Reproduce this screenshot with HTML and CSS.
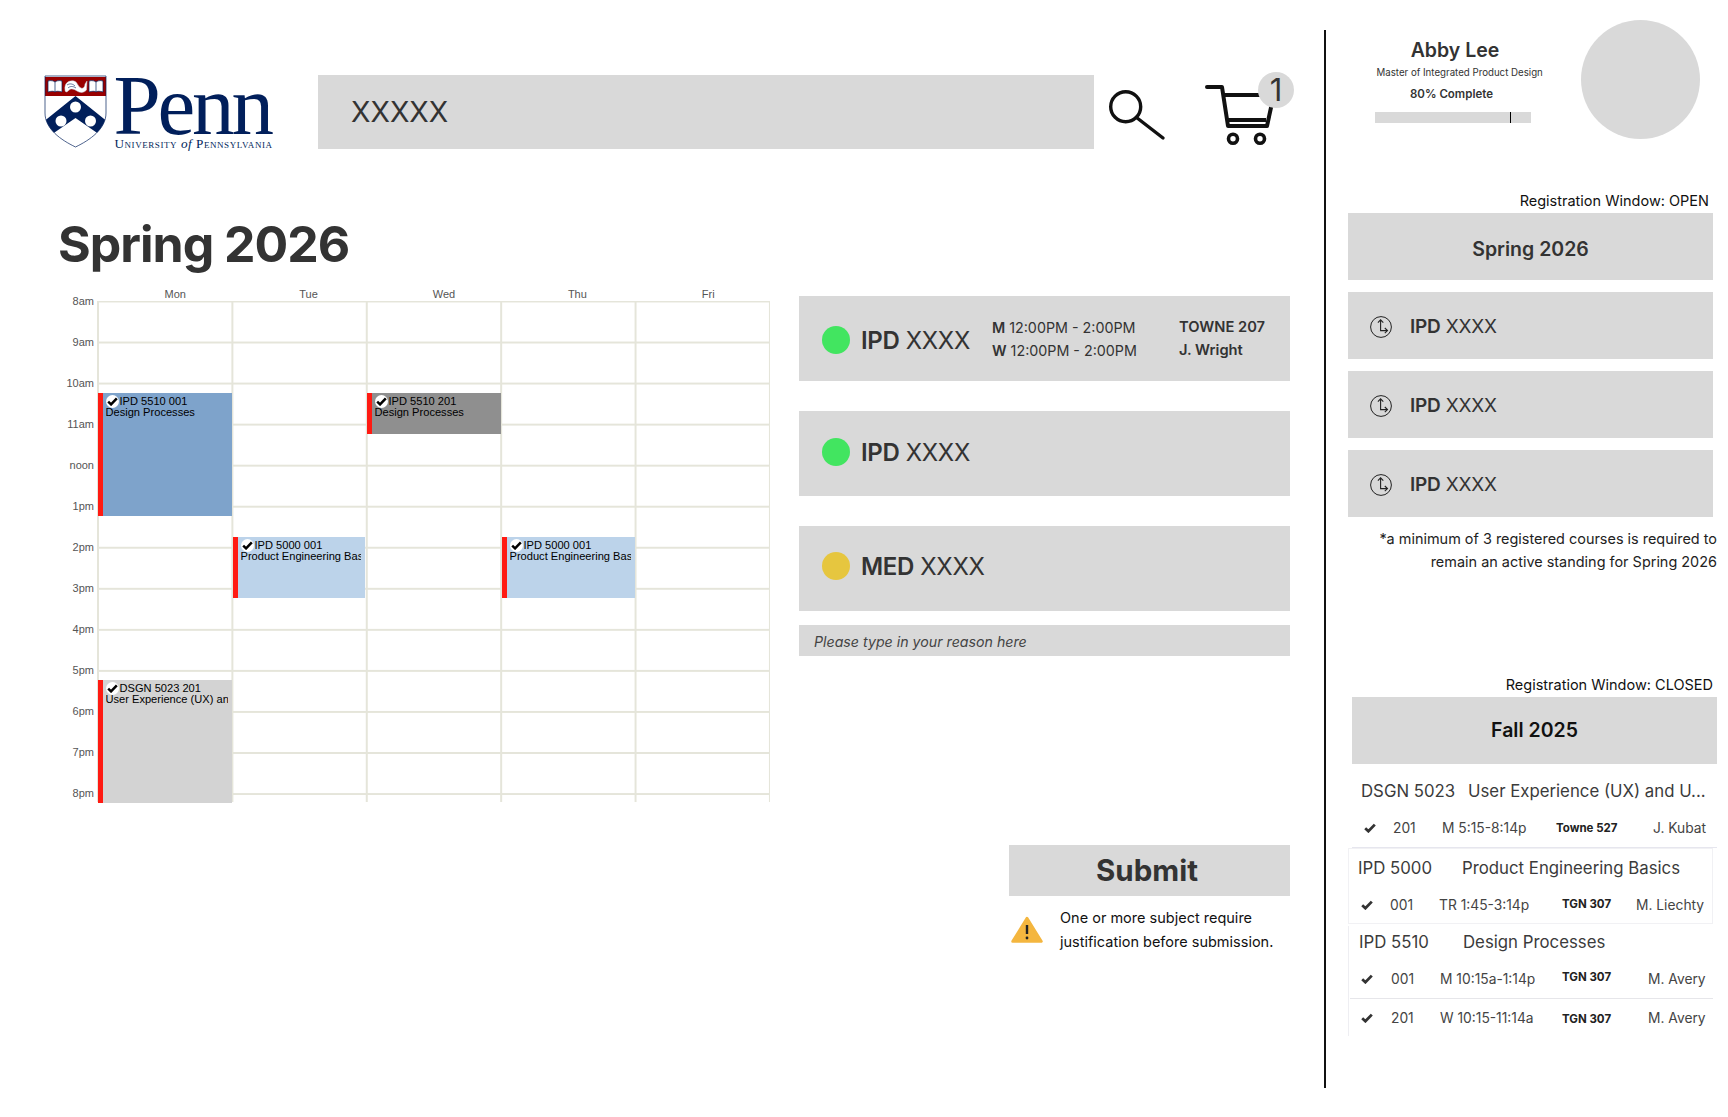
FILE: index.html
```html
<!DOCTYPE html>
<html lang="en">
<head>
<meta charset="utf-8">
<title>Penn course registration</title>
<link rel="stylesheet" href="styles.css">
</head>
<body>
<svg class="defs" width="0" height="0" aria-hidden="true">
  <symbol id="check" viewBox="0 0 12 10"><path d="M1.200 5.200 4.400 8.200 10.800 1.600" fill="none" stroke="currentColor" stroke-width="2.800"/></symbol>
  <symbol id="clock" viewBox="0 0 22 22">
    <circle cx="11" cy="11" r="10.400" fill="none" stroke="#222" stroke-width="1"/>
    <path d="M10.600 3.800V14.600H17.400M7.900 6.600 10.600 3.800 13.300 6.600M14.800 12 17.500 14.600 14.800 17.200" fill="none" stroke="#222" stroke-width="1.100"/>
  </symbol>
</svg>
<div class="page">
  <main class="main">
    <header class="header">
      <div class="logo">
        <svg class="shield" viewBox="0 0 63 73" width="63" height="73">
          <defs><clipPath id="shield-clip"><path d="M1 1H62V38C62 54 46 65 31.500 72 17 65 1 54 1 38Z"/></clipPath></defs>
          <path d="M1 1H62V38C62 54 46 65 31.500 72 17 65 1 54 1 38Z" fill="#fff"/>
          <g clip-path="url(#shield-clip)">
            <rect x="1" y="2" width="61" height="19" fill="#990000"/>
            <path d="M4 6C7 5 10 6 11 7 12 6 15 5 18 6V17C15 16 12 16 11 17 10 16 7 16 4 17Z" fill="#fff" stroke="#011f5b" stroke-width=".7"/>
            <path d="M45 6C48 5 51 6 52 7 53 6 56 5 59 6V17C56 16 53 16 52 17 51 16 48 16 45 17Z" fill="#fff" stroke="#011f5b" stroke-width=".7"/>
            <path d="M11 7V17M52 7V17" stroke="#011f5b" stroke-width=".7"/>
            <path d="M21 15C20 8 25 5 30 6 34 7 33 11 37 13 39 14 41 12 41 9L43 6 42.500 15C40 18 36 18 33 16 30 14 27 13 25 15 24 17 21 18 21 15Z" fill="#fff" stroke="#c9cedd" stroke-width=".5"/>
            <path d="M23 10C26 8 29 9 31 11M24 13C26 11 29 11 32 13" fill="none" stroke="#011f5b" stroke-width=".6"/>
            <path d="M31.500 21 70 52 59 62 31.500 43 4 62-7 52Z" fill="#011f5b"/>
            <circle cx="31.500" cy="32" r="5.500" fill="#fff"/>
            <circle cx="17" cy="46" r="5.500" fill="#fff"/>
            <circle cx="46.500" cy="46" r="5.500" fill="#fff"/>
          </g>
          <path d="M1 1H62V38C62 54 46 65 31.500 72 17 65 1 54 1 38Z" fill="none" stroke="#011f5b" stroke-width=".7"/>
        </svg>
        <div class="wordmark">
          <div class="penn">Penn</div>
          <div class="tagline">University <i>of</i> Pennsylvania</div>
        </div>
      </div>
      <div class="search">XXXXX</div>
      <svg class="search-icon" viewBox="0 0 58 54" width="58" height="54">
        <circle cx="17.700" cy="18.700" r="15" fill="none" stroke="#111" stroke-width="3.400"/>
        <path d="M28.500 29.500 55 50" fill="none" stroke="#111" stroke-width="3.400" stroke-linecap="round"/>
      </svg>
      <div class="cart">
        <svg viewBox="0 0 70 62" width="70" height="62">
          <path d="M3 2H18L24 41H63L68 18" fill="none" stroke="#111" stroke-width="4" stroke-linecap="round" stroke-linejoin="round"/>
          <path d="M20 10H60M24 35H62" fill="none" stroke="#111" stroke-width="4"/>
          <circle cx="29" cy="53.700" r="4.500" fill="none" stroke="#111" stroke-width="3.600"/>
          <circle cx="56" cy="53.700" r="4.500" fill="none" stroke="#111" stroke-width="3.600"/>
        </svg>
        <span class="badge">1</span>
      </div>
    </header>

    <h1 class="title">Spring 2026</h1>

    <div class="content">
      <section class="calendar">
        <div class="hours">
          <span>8am</span><span>9am</span><span>10am</span><span>11am</span><span>noon</span><span>1pm</span><span>2pm</span><span>3pm</span><span>4pm</span><span>5pm</span><span>6pm</span><span>7pm</span><span>8pm</span>
        </div>
        <div class="cal-main">
          <div class="days"><span class="day-odd">Mon</span><span>Tue</span><span class="day-odd">Wed</span><span>Thu</span><span class="day-fri">Fri</span></div>
          <div class="cal-grid">
            <div class="event ev-mon">
              <div class="ev-line"><span class="ev-check"><svg width="11" height="9"><use href="#check"/></svg></span>IPD 5510 001</div>
              <div class="ev-name">Design Processes</div>
            </div>
            <div class="event ev-wed">
              <div class="ev-line"><span class="ev-check"><svg width="11" height="9"><use href="#check"/></svg></span>IPD 5510 201</div>
              <div class="ev-name">Design Processes</div>
            </div>
            <div class="event ev-tue">
              <div class="ev-line"><span class="ev-check"><svg width="11" height="9"><use href="#check"/></svg></span>IPD 5000 001</div>
              <div class="ev-name">Product Engineering Basics</div>
            </div>
            <div class="event ev-thu">
              <div class="ev-line"><span class="ev-check"><svg width="11" height="9"><use href="#check"/></svg></span>IPD 5000 001</div>
              <div class="ev-name">Product Engineering Basics</div>
            </div>
            <div class="event ev-dsgn">
              <div class="ev-line"><span class="ev-check"><svg width="11" height="9"><use href="#check"/></svg></span>DSGN 5023 201</div>
              <div class="ev-name">User Experience (UX) and UI</div>
            </div>
          </div>
        </div>
      </section>

      <section class="cart-list">
        <div class="card card-one">
          <span class="dot dot-green"></span>
          <span class="code"><b>IPD</b> XXXX</span>
          <div class="schedule">
            <div><b>M</b> 12:00PM - 2:00PM</div>
            <div><b>W</b> 12:00PM - 2:00PM</div>
          </div>
          <div class="place">
            <div>TOWNE 207</div>
            <div>J. Wright</div>
          </div>
        </div>
        <div class="card card-two">
          <span class="dot dot-green"></span>
          <span class="code"><b>IPD</b> XXXX</span>
        </div>
        <div class="card card-three">
          <span class="dot dot-yellow"></span>
          <span class="code"><b>MED</b> XXXX</span>
        </div>
        <div class="reason">Please type in your reason here</div>
        <div class="submit">Submit</div>
        <div class="warning">
          <svg viewBox="0 0 32 27" width="32" height="27">
            <path d="M16 2 30.500 25.500H1.500Z" fill="#f4b63f" stroke="#f4b63f" stroke-width="2.500" stroke-linejoin="round"/>
            <path d="M16 9V18" stroke="#222" stroke-width="2.400"/>
            <circle cx="16" cy="22" r="1.400" fill="#222"/>
          </svg>
          <p>One or more subject require justification before submission.</p>
        </div>
      </section>
    </div>
  </main>

  <div class="divider"></div>

  <aside class="aside">
    <div class="profile">
      <div class="profile-text">
        <div class="name">Abby Lee</div>
        <div class="degree">Master of Integrated Product Design</div>
        <div class="complete">80% Complete</div>
        <div class="progress"><span class="tick"></span></div>
      </div>
      <div class="avatar"></div>
    </div>

    <div class="window window-open">Registration Window: OPEN</div>
    <div class="term term-spring">Spring 2026</div>
    <div class="pending"><svg width="22" height="22"><use href="#clock"/></svg><span><b>IPD</b> XXXX</span></div>
    <div class="pending"><svg width="22" height="22"><use href="#clock"/></svg><span><b>IPD</b> XXXX</span></div>
    <div class="pending"><svg width="22" height="22"><use href="#clock"/></svg><span><b>IPD</b> XXXX</span></div>
    <p class="note">*a minimum of 3 registered courses is required to<br>remain an active standing for Spring 2026</p>

    <div class="window window-closed">Registration Window: CLOSED</div>
    <div class="term term-fall">Fall 2025</div>

    <div class="course course-dsgn">
      <div class="course-head"><span class="head-code-dsgn">DSGN 5023</span><span>User Experience (UX) and U...</span></div>
      <div class="row row-dsgn">
        <svg width="12" height="10"><use href="#check"/></svg><span>201</span><span>M 5:15-8:14p</span><b>Towne 527</b><span>J. Kubat</span>
      </div>
    </div>

    <div class="course course-5000">
      <div class="course-head"><span class="head-code">IPD 5000</span><span>Product Engineering Basics</span></div>
      <div class="row row-5000">
        <svg width="12" height="10"><use href="#check"/></svg><span>001</span><span>TR 1:45-3:14p</span><b>TGN 307</b><span>M. Liechty</span>
      </div>
    </div>

    <div class="course course-5510">
      <div class="course-head"><span class="head-code">IPD 5510</span><span>Design Processes</span></div>
      <div class="row row-5510 row-first">
        <svg width="12" height="10"><use href="#check"/></svg><span>001</span><span>M 10:15a-1:14p</span><b>TGN 307</b><span>M. Avery</span>
      </div>
      <div class="row row-5510 row-second">
        <svg width="12" height="10"><use href="#check"/></svg><span>201</span><span>W 10:15-11:14a</span><b>TGN 307</b><span>M. Avery</span>
      </div>
    </div>
  </aside>
</div>
</body>
</html>
```

FILE: styles.css
```css
* { box-sizing: border-box; }
html, body { margin: 0; padding: 0; background: #fff; }
body { font-family: "Inter", "Liberation Sans", sans-serif; color: #333; overflow: hidden; }
b { font-weight: 600; }
.defs { position: absolute; }

.page { display: flex; width: 1728px; height: 1117px; }
.main { width: 1324px; flex: none; padding: 75px 0 0 44px; }
.divider { width: 1.500px; flex: none; margin: 30px 0 29px; background: #111; }
.aside { flex: 1; padding-top: 20px; min-width: 0; }

/* Header */
.header { display: flex; align-items: flex-start; height: 74px; }
.logo { display: flex; width: 227px; margin-right: 47px; flex: none; }
.shield { flex: none; display: block; }
.wordmark { margin-left: 6.500px; color: #011f5b; font-family: "Liberation Serif", serif; }
.penn { font-size: 85px; line-height: 60px; letter-spacing: -3.200px; height: 62px; white-space: nowrap; }
.tagline { font-size: 13.200px; line-height: 13px; font-variant: small-caps; letter-spacing: .55px; white-space: nowrap; padding-left: 1px; }
.tagline i { font-variant: normal; }
.search { width: 776px; height: 74px; flex: none; background: #d9d9d9; padding-left: 33px; font-size: 28.500px; line-height: 74px; color: #333; }
.search-icon { flex: none; margin: 13px 0 0 14px; }
.cart { position: relative; flex: none; width: 70px; height: 62px; margin: 10px 0 0 38px; }
.cart svg { display: block; }
.badge { position: absolute; left: 54px; top: -13.500px; width: 36px; height: 36px; border-radius: 50%; background: #d9d9d9; text-align: center; font-size: 31px; line-height: 36px; color: #333; }

.title { margin: 65px 0 0 14px; font-size: 50px; line-height: 60px; font-weight: 700; color: #333; height: 72px; letter-spacing: -1px; }

/* Calendar */
.content { display: flex; align-items: flex-start; }
.calendar { display: flex; width: 726px; flex: none; font-family: "Liberation Sans", Arial, sans-serif; }
.hours { width: 50px; flex: none; margin-top: -5.500px; display: flex; flex-direction: column; text-align: right; font-size: 11px; color: #555; }
.hours span { height: 41.050px; line-height: 41.050px; }
.cal-main { width: 673px; margin-left: 2.500px; flex: none; }
.days { display: grid; grid-template-columns: repeat(5, 134.400px); height: 15px; font-size: 11px; line-height: 17px; color: #555; text-align: center; }
.days span { padding-left: 21px; }
.days .day-odd { padding-left: 23px; }
.days .day-fri { padding-left: 14px; }
.cal-grid {
  position: relative;
  height: 501px;
  width: 673px;
  background-color: #fff;
  background-image:
    linear-gradient(to right, #e5e5da 1.600px, transparent 1.600px),
    linear-gradient(to bottom, #e5e5da 1.600px, transparent 1.600px);
  background-size: 134.400px 100%, 100% 41.050px;
  background-position: 0 0, 0 -0.500px;
}
.event { position: absolute; border-left: 5.500px solid #ff1a12; padding: 2.500px 4px 0 3px; font-size: 11.100px; line-height: 11px; color: #000; overflow: hidden; white-space: nowrap; }
.ev-line { display: flex; align-items: center; height: 11px; }
.ev-check { width: 13px; height: 13px; border-radius: 50%; background: #fff; display: inline-flex; align-items: center; justify-content: center; margin-right: 1px; flex: none; }
.ev-check svg { display: block; }
.ev-name { overflow: hidden; }
.ev-mon { left: 1px; top: 92px; width: 134px; height: 123px; background: #7ea3cb; }
.ev-wed { left: 270px; top: 92px; width: 134px; height: 41px; background: #8f8f8f; }
.ev-tue { left: 136px; top: 236px; width: 132.500px; height: 61px; background: #bcd3ea; padding-top: 3px; }
.ev-thu { left: 405px; top: 236px; width: 133px; height: 61px; background: #bcd3ea; padding-top: 3px; }
.ev-dsgn { left: 1px; top: 379px; width: 134px; height: 123px; background: #d3d3d3; }

/* Selected courses */
.cart-list { width: 491px; margin: 10px 0 0 29px; flex: none; }
.card { display: flex; align-items: center; height: 85px; margin-bottom: 30px; background: #d9d9d9; padding-left: 23px; }
.card-one { padding-top: 3px; }
.card-two { padding-bottom: 3px; }
.card-three { padding-bottom: 5px; margin-bottom: 14px; }
.dot { width: 28px; height: 28px; border-radius: 50%; flex: none; }
.dot-green { background: #42e560; }
.dot-yellow { background: #e6c63f; }
.code { margin-left: 11px; padding-top: 2px; font-size: 24px; line-height: 30px; color: #333; white-space: nowrap; letter-spacing: -.35px; }
.card-one .code { width: 131px; flex: none; }
.schedule { width: 187px; flex: none; font-size: 14.300px; line-height: 23px; margin-top: -3px; color: #333; }
.place { font-size: 14.700px; line-height: 23px; font-weight: 600; margin-top: -3px; color: #333; }
.reason { height: 31px; background: #d9d9d9; padding-left: 15px; font-size: 14.200px; line-height: 34px; font-style: italic; color: #444; }
.submit { width: 281px; height: 51px; margin: 189px 0 0 auto; background: #d9d9d9; padding-right: 5px; text-align: center; font-size: 29.500px; line-height: 51px; font-weight: 700; color: #333; }
.warning { display: flex; width: 281px; margin: 10px 0 0 auto; padding-left: 2px; color: #111; }
.warning svg { flex: none; margin: 10px 17px 0 0; }
.warning p { margin: 0; font-size: 14.500px; line-height: 24px; width: 225px; }

/* Profile */
.profile { display: flex; height: 119px; padding-left: 49.500px; }
.profile-text { width: 156px; margin-right: 50px; flex: none; }
.name { margin-top: 18px; height: 24px; line-height: 24px; font-size: 19.500px; font-weight: 600; color: #333; text-align: center; padding-left: 4px; white-space: nowrap; }
.degree { margin: 3px 0 0 1.500px; height: 14px; line-height: 16px; font-size: 9.700px; color: #333; white-space: nowrap; }
.complete { margin: 7px 0 0 35px; height: 16px; line-height: 16px; font-size: 11.500px; font-weight: 600; color: #333; white-space: nowrap; }
.progress { position: relative; margin-top: 10px; height: 11px; background: #d9d9d9; }
.tick { position: absolute; left: 134.500px; top: 0; width: 1px; height: 11px; background: #000; }
.avatar { width: 119px; height: 119px; border-radius: 50%; background: #d9d9d9; flex: none; }

.window { height: 18px; line-height: 18px; font-size: 14.500px; color: #111; text-align: right; white-space: nowrap; }
.window-open { margin-top: 53px; padding-right: 19px; }
.window-closed { margin-top: 103.500px; padding-right: 15px; }
.term { display: flex; align-items: center; justify-content: center; height: 67px; width: 365px; margin-top: 3px; background: #d9d9d9; font-size: 19.500px; font-weight: 600; }
.term-spring { margin-left: 22.500px; padding-top: 4px; color: #333; }
.term-fall { margin-left: 26.500px; padding-bottom: 2px; color: #111; }
.pending { display: flex; align-items: center; width: 365px; height: 67px; margin: 12px 0 0 22.500px; padding: 2px 0 0 22px; background: #d9d9d9; font-size: 19px; letter-spacing: -.2px; color: #333; }
.pending svg { flex: none; margin-right: 18px; }
.note { margin: 9.500px 11px 0 0; font-size: 14.450px; line-height: 23px; text-align: right; color: #222; white-space: nowrap; }

/* Past courses */
.course { color: #3b3b3b; }
.course-head { display: flex; font-size: 16.800px; line-height: 22px; white-space: nowrap; }
.row { display: grid; align-items: center; font-size: 13.800px; line-height: 18px; color: #444; white-space: nowrap; }
.row svg { color: #333; display: block; }
.row b { font-size: 11.500px; font-weight: 700; color: #222; }
.course-dsgn { margin-left: 26.500px; width: 365px; height: 84px; padding: 16px 0 0 9px; border-bottom: 1px solid #e6e6ee; }
.head-code-dsgn { width: 107px; flex: none; }
.course-dsgn .row { margin-top: 17px; }
.row-dsgn { grid-template-columns: 29px 49px 114px 97px auto; padding-left: 3px; }
.course-5000 { margin-left: 22.500px; width: 365px; height: 76px; border: 1px solid #f1f1f4; padding: 8px 0 0 9px; }
.head-code { width: 104px; flex: none; }
.course-5000 .row { margin-top: 17px; }
.course-5000 .row b { margin-top: -2px; }
.row-5000 { grid-template-columns: 29px 49px 123px 74px auto; padding-left: 3px; }
.course-5510 { margin: 2px 0 0 22.500px; width: 365px; height: 110px; border-left: 1px solid #eeeef2; padding: 5px 0 0 10px; }
.row-5510 { grid-template-columns: 30px 49px 122px 86px auto; padding-left: 2px; }
.row-first { height: 37px; margin-top: 9px; margin-left: -9px; padding-left: 11px; padding-bottom: 3px; border-bottom: 1px solid #e6e6ea; }
.row-first b { margin-top: -4px; }
.row-second { margin-top: 9px; }
.row-second b { margin-top: 2px; }
```
